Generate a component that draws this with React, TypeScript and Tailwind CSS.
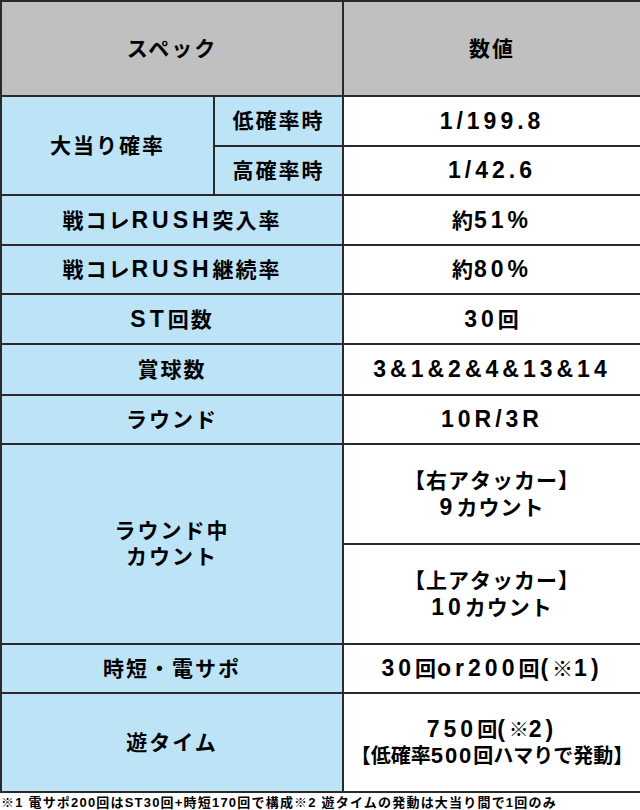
import type { ReactNode } from "react";

const font = {
  fontFamily: '"Liberation Sans", "Noto Sans CJK JP", sans-serif',
};

const cell = "border-2 border-[#2a2a2a] text-center align-middle font-bold";
const label = `${cell} bg-[#bde3f7] text-[21px] tracking-[2px]`;
const value = `${cell} bg-white text-[21px] tracking-[1px]`;

// latin runs are set larger and wider in the original
const L = ({ children }: { children: ReactNode }) => (
  <span className="text-[23px] tracking-[4px]">{children}</span>
);

const rows: { label: ReactNode; value: ReactNode; h: string }[] = [
  {
    label: (
      <>
        戦コレ<L>RUSH</L>突入率
      </>
    ),
    value: (
      <>
        約<L>51%</L>
      </>
    ),
    h: "h-[50px]",
  },
  {
    label: (
      <>
        戦コレ<L>RUSH</L>継続率
      </>
    ),
    value: (
      <>
        約<L>80%</L>
      </>
    ),
    h: "h-[49px]",
  },
  {
    label: (
      <>
        <L>ST</L>回数
      </>
    ),
    value: (
      <>
        <L>30</L>回
      </>
    ),
    h: "h-[50px]",
  },
  { label: "賞球数", value: <L>3&amp;1&amp;2&amp;4&amp;13&amp;14</L>, h: "h-[51px]" },
  { label: "ラウンド", value: <L>10R/3R</L>, h: "h-[49px]" },
];

export default function App() {
  return (
    <div className="w-[640px] bg-white text-black" style={font}>
      <table className="w-[640px] table-fixed border-collapse leading-[26px]">
        <colgroup>
          <col className="w-[213px]" />
          <col className="w-[129px]" />
          <col className="w-[298px]" />
        </colgroup>
        <tbody>
          {/* Header */}
          <tr className="h-[95px]">
            <td colSpan={2} className={`${label} !bg-[#c0c0c0]`}>
              スペック
            </td>
            <td className={`${label} !bg-[#c0c0c0]`}>数値</td>
          </tr>

          <tr className="h-[50px]">
            <td rowSpan={2} className={label}>
              大当り確率
            </td>
            <td className={label}>低確率時</td>
            <td className={value}>
              <L>1/199.8</L>
            </td>
          </tr>
          <tr className="h-[49px]">
            <td className={label}>高確率時</td>
            <td className={value}>
              <L>1/42.6</L>
            </td>
          </tr>

          {rows.map((r, i) => (
            <tr key={i} className={r.h}>
              <td colSpan={2} className={label}>
                {r.label}
              </td>
              <td className={value}>{r.value}</td>
            </tr>
          ))}

          <tr className="h-[100px]">
            <td colSpan={2} rowSpan={2} className={label}>
              ラウンド中
              <br />
              カウント
            </td>
            <td className={value}>
              【右アタッカー】
              <br />
              <L>9</L>カウント
            </td>
          </tr>
          <tr className="h-[100px]">
            <td className={value}>
              【上アタッカー】
              <br />
              <L>10</L>カウント
            </td>
          </tr>

          <tr className="h-[49px]">
            <td colSpan={2} className={label}>
              時短・電サポ
            </td>
            <td className={value}>
              <L>30</L>回<L>or200</L>回<L>(</L>※<L>1)</L>
            </td>
          </tr>
          <tr className="h-[99px]">
            <td colSpan={2} className={label}>
              遊タイム
            </td>
            <td className={`${value} !text-[20px] !tracking-[0px]`}>
              <L>750</L>回<L>(</L>※<L>2)</L>
              <br />
              【低確率<span className="text-[22px] tracking-[2px]">500</span>回ハマりで発動】
            </td>
          </tr>
        </tbody>
      </table>
      <p className="px-[1px] pt-[2px] text-[13px] font-bold leading-[16px] tracking-[1.2px] whitespace-nowrap">
        ※1 電サポ200回はST30回+時短170回で構成※2 遊タイムの発動は大当り間で1回のみ
      </p>
    </div>
  );
}
